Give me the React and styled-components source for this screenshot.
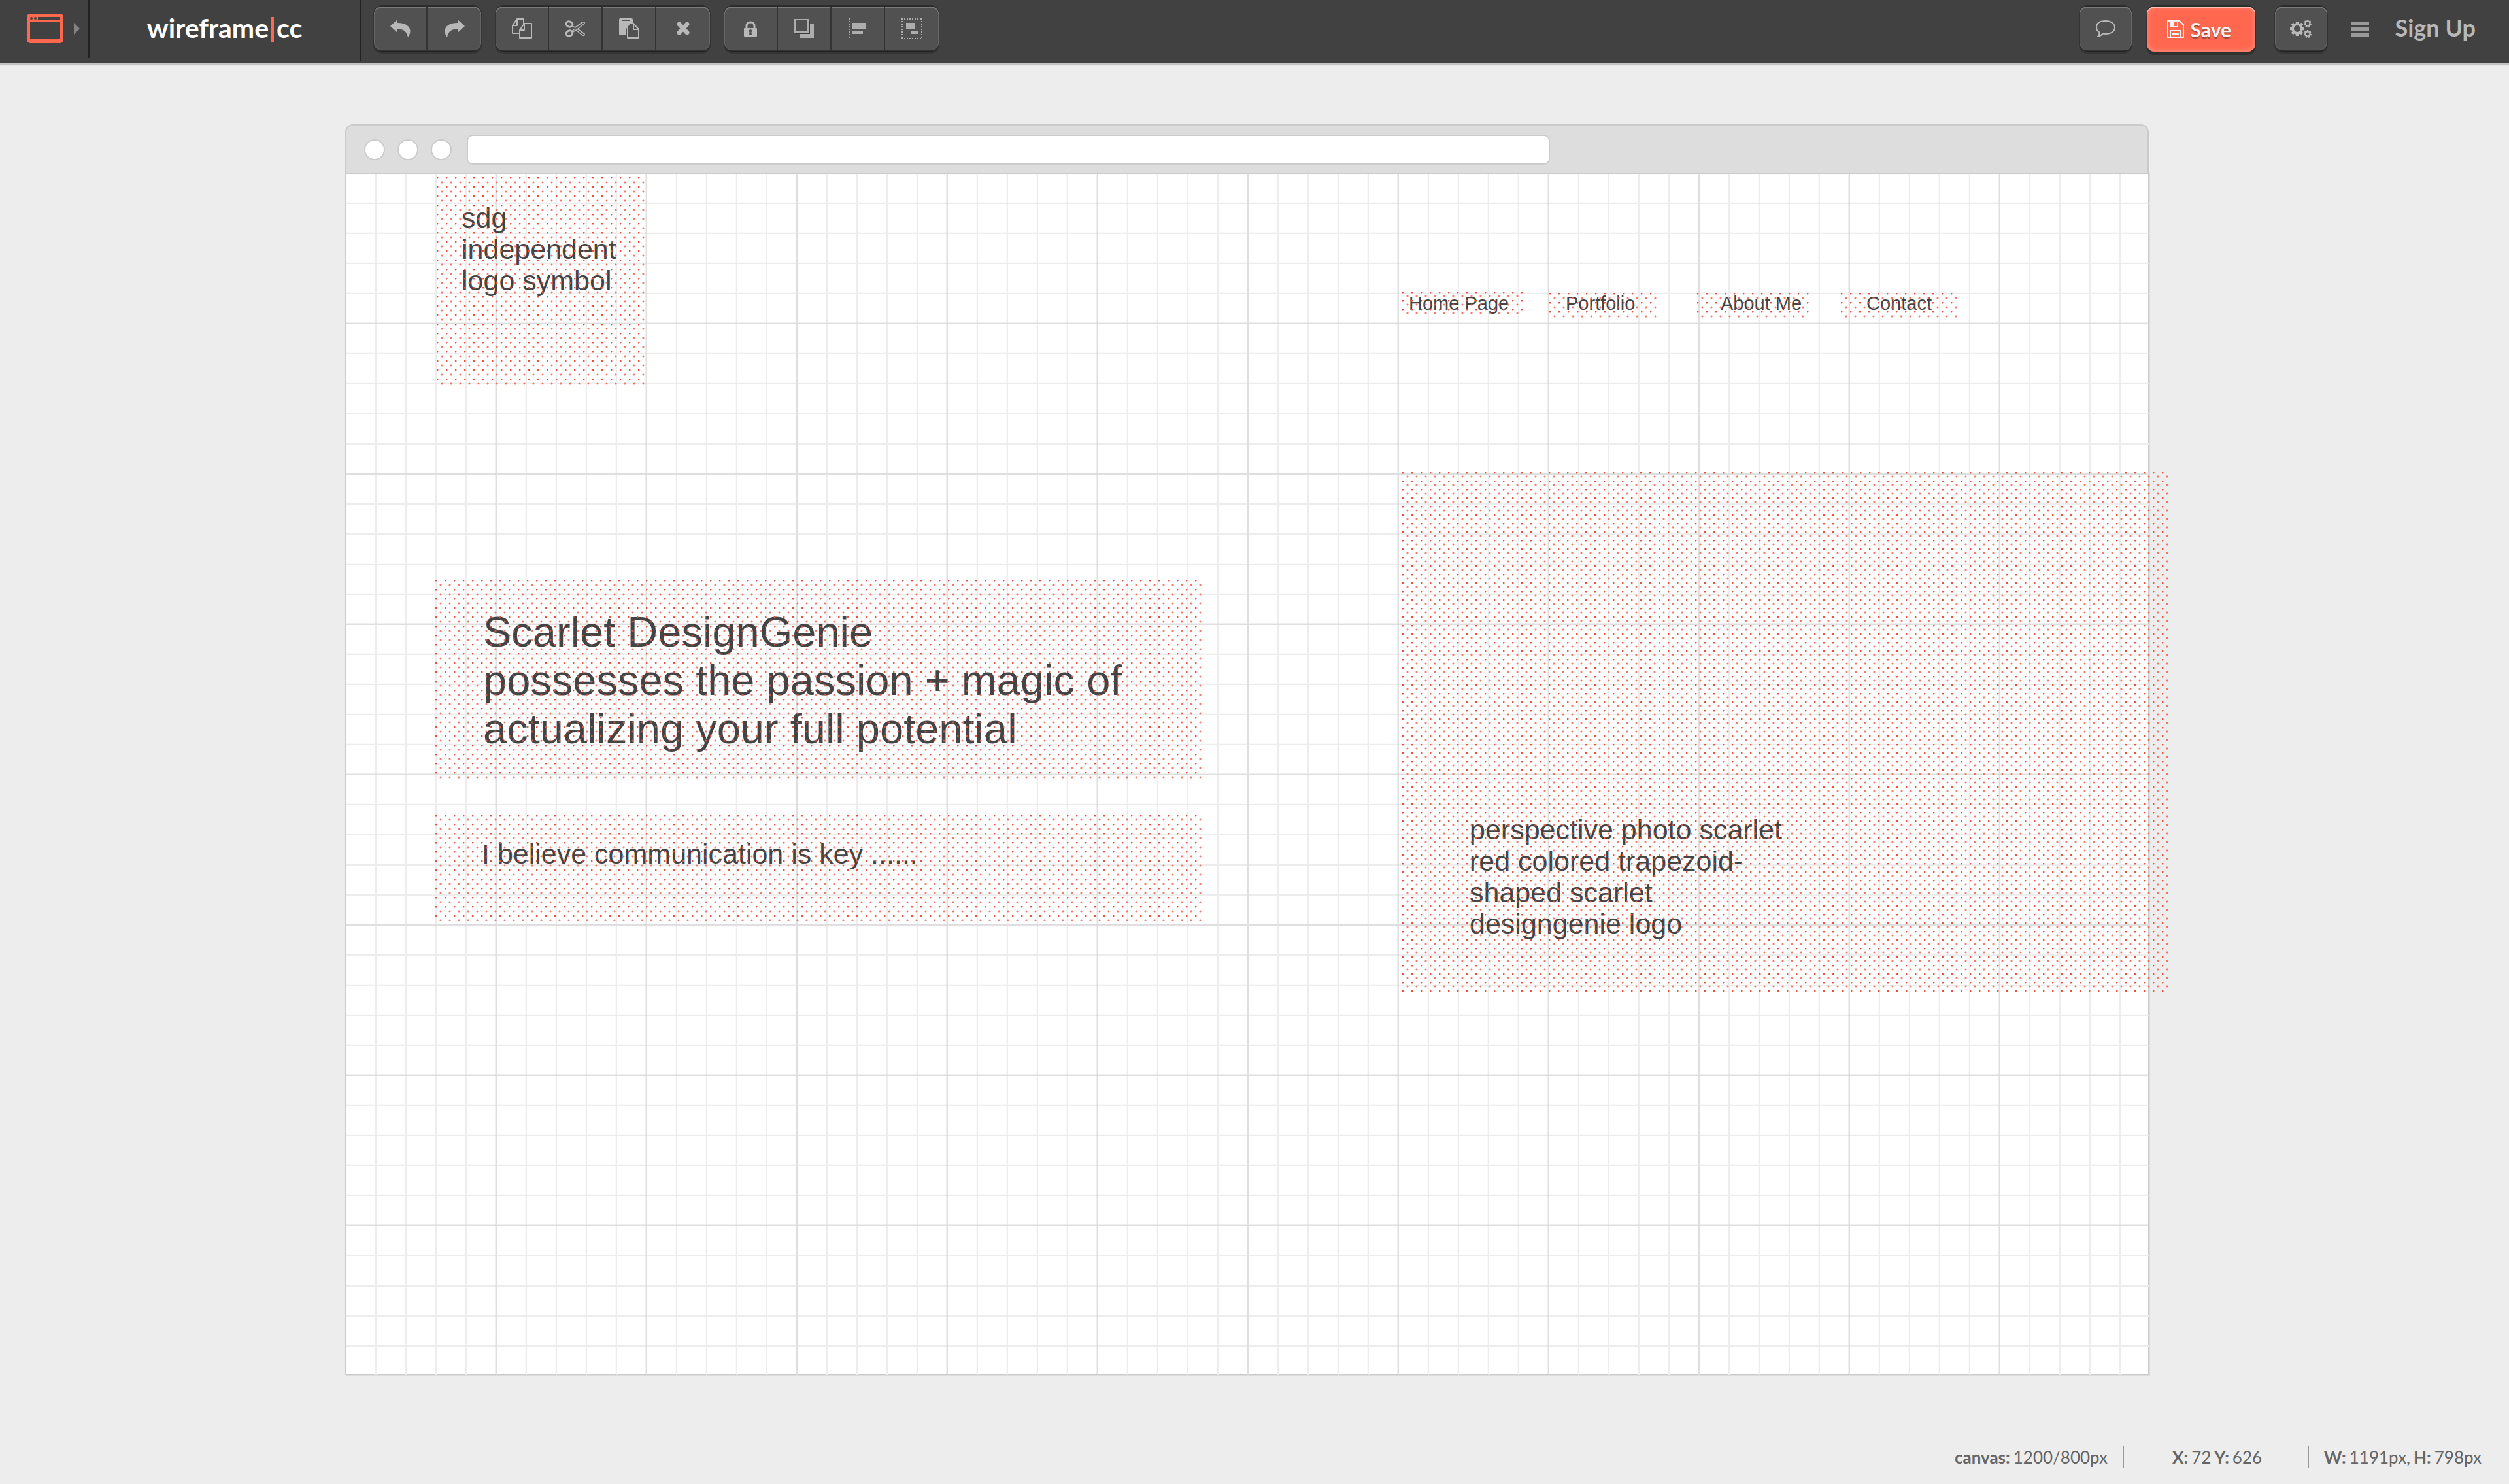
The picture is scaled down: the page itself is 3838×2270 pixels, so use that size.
import React from "react";
import styled, { createGlobalStyle, css } from "styled-components";

const ACCENT = "#ff674f";
const ICON = "#b8b8b8";
const UI_FONT = 'Lato, "Open Sans", sans-serif';
const SKETCH_FONT = '"Liberation Sans", Arial, sans-serif';

const GlobalStyle = createGlobalStyle`
  *, *::before, *::after { box-sizing: border-box; }
  body {
    margin: 0;
    background: #ededed;
    color: #666;
    font-family: ${UI_FONT};
  }
  button, input { font: inherit; color: inherit; border: 0; margin: 0; padding: 0; }
  p, h1 { margin: 0; font-weight: 400; }
  svg { display: block; flex: none; }
`;

const Page = styled.div`
  display: flex;
  flex-direction: column;
  min-height: 100vh;
  overflow: hidden;
`;

/* ---------- top bar ---------- */

const Header = styled.header`
  display: flex;
  align-items: flex-start;
  height: 96px;
  background: #414141;
  box-shadow: 0 3px 0 #c3c3c3, 0 4px 0 #d4d4d4, 0 5px 0 #e4e4e4;
`;

const StencilButton = styled.button`
  display: flex;
  align-items: center;
  gap: 16px;
  width: 137px;
  height: 89px;
  padding: 0 0 2px 41px;
  background: none;
  border-right: 2px solid #222;
`;

const Brand = styled.a`
  display: flex;
  align-items: center;
  justify-content: center;
  width: 415px;
  height: 94px;
  padding-bottom: 9px;
  border-right: 2px solid #222;
  color: #fff;
  font-size: 41px;
  font-weight: 700;
  line-height: 48px;
  text-decoration: none;
`;

const BrandBar = styled.span`
  width: 4px;
  height: 38px;
  margin: 5px 4px 0;
  background: ${ACCENT};
`;

const Tools = styled.div`
  display: flex;
  gap: 22px;
  padding: 10px 0 0 20px;
`;

const raised = css`
  border-radius: 12px;
  background: #515151;
  box-shadow:
    inset 0 2px 0 #7a7a7a,
    inset 1px 0 0 #666,
    inset -1px 0 0 #666,
    0 -2px 0 #2c2c2c,
    0 0 0 1px #333,
    0 2px 0 #222,
    0 4px 0 1px #353535;
`;

const ToolGroup = styled.div`
  ${raised}
  display: flex;
`;

const ToolButton = styled.button`
  display: flex;
  align-items: center;
  justify-content: center;
  width: 82px;
  height: 67px;
  background: none;
  color: ${ICON};

  &:not(:last-child) { border-right: 2px solid #333; }
`;

const Actions = styled.div`
  display: flex;
  align-items: flex-start;
  margin-left: auto;
  padding: 10px 51px 0 0;
`;

const RoundButton = styled.button`
  ${raised}
  display: flex;
  align-items: center;
  justify-content: center;
  width: 80px;
  height: 67px;
  color: ${ICON};
`;

const SaveButton = styled.button`
  display: flex;
  align-items: center;
  gap: 10px;
  width: 166px;
  height: 69px;
  margin: 0 30px 0 23px;
  padding-left: 31px;
  border-radius: 12px;
  background: ${ACCENT};
  box-shadow:
    inset 0 2px 0 #ffc0b5,
    inset 0 0 8px #ff9c8c,
    0 -2px 0 #2c2c2c,
    0 4px 0 1px #303030;
  color: #f3f3f3;
  font-size: 30px;
  font-weight: 700;
  line-height: 36px;
  text-shadow: 0 2px 1px #a04538;
`;

const MenuButton = styled.button`
  display: flex;
  align-items: center;
  height: 67px;
  margin: 0 40px 0 37px;
  padding-top: 2px;
  background: none;
  color: #999;
`;

const SignUp = styled.a`
  display: flex;
  align-items: center;
  height: 67px;
  padding-bottom: 4px;
  color: ${ICON};
  font-size: 36px;
  font-weight: 700;
  line-height: 44px;
  text-decoration: none;
`;

/* ---------- browser frame and canvas ---------- */

const Stage = styled.main`
  padding: 94px 550px 0 528px;
`;

const Chrome = styled.div`
  display: flex;
  align-items: center;
  height: 74px;
  margin-right: 1px;
  padding: 2px 0 0 27px;
  border: 2px solid #cbcbcb;
  border-bottom: 0;
  border-radius: 12px 12px 0 0;
  background: #ddd;
`;

const Dot = styled.span`
  width: 32px;
  height: 32px;
  margin-right: 19px;
  border: 2px solid #cbcbcb;
  border-radius: 50%;
  background: #fff;
`;

const Address = styled.input`
  width: calc(60% + 20px);
  height: 46px;
  margin-left: 4px;
  padding: 0 16px;
  border: 2px solid #cbcbcb;
  border-radius: 9px;
  background: #fff;
  font-size: 26px;
  outline: 0;
`;

const gridLine = (dir, color, edge, step) =>
  `repeating-linear-gradient(${dir}, transparent 0 ${step - 3}px, ${edge} ${step - 3}px ${step - 2}px, ${color} ${step - 2}px ${step}px)`;

const Canvas = styled.section`
  position: relative;
  height: 1840px;
  border-top: 2px solid #cbcbcb;
  background-color: #fff;
  background-image:
    linear-gradient(#cbcbcb, #cbcbcb),
    ${gridLine("to right", "#dfdfdf", "rgba(0, 0, 0, 0.04)", 230)},
    ${gridLine("to bottom", "#dfdfdf", "rgba(0, 0, 0, 0.04)", 230)},
    ${gridLine("to right", "#ededed", "rgba(0, 0, 0, 0.02)", 46)},
    ${gridLine("to bottom", "#ededed", "rgba(0, 0, 0, 0.02)", 46)},
    linear-gradient(#cbcbcb, #cbcbcb),
    linear-gradient(#cbcbcb, #cbcbcb);
  background-size: 2px 100%, auto, auto, auto, auto, 2px 100%, 100% 2px;
  background-position: 0 0, 2px 0, 0 0, 2px 0, 0 0, 100% 0, 0 100%;
  background-repeat: no-repeat;
  box-shadow: 1px 1px 0 #dcdcdc;
`;

const Item = styled.div`
  position: absolute;
  left: ${p => p.$x}px;
  top: ${p => p.$y}px;
  width: ${p => p.$w}px;
  height: ${p => p.$h}px;
  padding: ${p => p.$pad};

  &::after {
    content: "";
    position: absolute;
    inset: 0;
    pointer-events: none;
    background-image:
      radial-gradient(circle at 1px 1px, #ee4f3b 1px, transparent 2px),
      radial-gradient(circle at 8px ${p => p.$row - 6}px, rgba(244, 86, 66, 0.8) 1px, transparent 2px);
    background-size: 14px ${p => p.$row}px;
  }
`;

const Note = styled.p`
  max-width: 500px;
  color: #444;
  font-family: ${SKETCH_FONT};
  font-size: 43px;
  line-height: 48px;
  ${p => p.$wide && "max-width: none;"}
`;

const Headline = styled.h1`
  color: #444;
  font-family: ${SKETCH_FONT};
  font-size: 65px;
  line-height: 74px;
`;

const NavLabel = styled.p`
  color: #444;
  font-family: ${SKETCH_FONT};
  font-size: 29px;
  line-height: 33px;
  white-space: nowrap;
`;

/* ---------- status bar ---------- */

const Status = styled.footer`
  display: flex;
  justify-content: flex-end;
  align-items: center;
  height: 33px;
  margin: auto 42px 25px 0;
  font-size: 26px;
  line-height: 30px;
`;

const Readout = styled.span`
  display: flex;
  gap: 5px;
`;

const Rule = styled.span`
  width: 2px;
  height: 33px;
  background: #999;
  margin: ${p => (p.$end ? "0 23px 0 70px" : "0 74px 0 23px")};
`;

/* ---------- icons ---------- */

const Svg = ({ w, h, children, ...rest }) => (
  <svg width={w} height={h} viewBox={`0 0 ${w} ${h}`} fill="currentColor" aria-hidden="true" {...rest}>
    {children}
  </svg>
);

const outline = { fill: "none", stroke: "currentColor", strokeWidth: 2, strokeLinejoin: "round" };

const WindowIcon = () => (
  <Svg w={56} h={45} color={ACCENT}>
    <path
      fillRule="evenodd"
      d="M5 0h46a5 5 0 0 1 5 5v35a5 5 0 0 1-5 5H5a5 5 0 0 1-5-5V5a5 5 0 0 1 5-5zM5 13v26h46V13zM17 5v4h34V5z"
    />
    <circle cx="7" cy="7" r="2" fill="#414141" />
    <circle cx="13" cy="7" r="2" fill="#414141" />
  </Svg>
);
const Caret = () => (
  <Svg w={9} h={18} color="#848484"><path d="M0 0l9 9-9 9z" /></Svg>
);
const bend = "M11 0 0 10l11 10v-5c9-1 14 3 16 12 8-11 2-22-16-22z";
const UndoIcon = () => <Svg w={31} h={28}><path d={bend} /></Svg>;
const RedoIcon = () => <Svg w={31} h={28}><path d={bend} transform="matrix(-1 0 0 1 31 0)" /></Svg>;
const CopyIcon = () => (
  <Svg w={31} h={32}>
    <path {...outline} d="M11 23H1V11L8 1h10v7M8 1v10H1M12 18l7-10h11v22H12zM19 8v10h-7" />
  </Svg>
);
const CutIcon = () => (
  <Svg w={32} h={26}>
    <ellipse cx="7" cy="6" rx="5" ry="4" {...outline} strokeWidth="3" transform="rotate(25 7 6)" />
    <ellipse cx="7" cy="20" rx="5" ry="4" {...outline} strokeWidth="3" transform="rotate(-25 7 20)" />
    <path {...outline} strokeWidth="1.6" d="M11 9l5 2L27 3q4-1 3 2L19 14l-7 4M11 17l4-4M19 13l11 8q1 3-3 2l-10-8" />
  </Svg>
);
const PasteIcon = () => (
  <Svg w={31} h={32}>
    <path d="M2 0h17q2 0 2 2v5h-3l-7 9v10H2q-2 0-2-2V2q0-2 2-2z" />
    <path d="M4 3h13" stroke="#515151" strokeWidth="2" />
    <path d="M13 18l6-10h4l7 9v13H13z" fill="#515151" />
    <path {...outline} d="M13 8h9l8 9v13H13zM22 8v9h8" />
  </Svg>
);
const DeleteIcon = () => (
  <Svg w={20} h={21}>
    <path d="M4 4l12 13M16 4L4 17" stroke="currentColor" strokeWidth="7" strokeLinecap="round" />
  </Svg>
);
const LockIcon = () => (
  <Svg w={20} h={24}>
    <path {...outline} strokeWidth="3" d="M4 12V8q0-6 6-6t6 6v4" />
    <path fillRule="evenodd" d="M1 11h18q1 0 1 1v11q0 1-1 1H1q-1 0-1-1V12q0-1 1-1zm9 2a2.400 2.400 0 0 0-1.500 4.200L8 21h4l-.5-3.800A2.400 2.400 0 0 0 10 13z" />
  </Svg>
);
const FrontIcon = () => (
  <Svg w={30} h={29} color="#adadad">
    <path d="M24 8h6v21H8v-6h16z" />
    <path d="M22 3h2v20H3v-2h19z" fill="#3a3a3a" />
    <path d="M1 1h20v19H1z" fill="none" stroke="currentColor" strokeWidth="2" />
  </Svg>
);
const AlignIcon = () => (
  <Svg w={26} h={32} color="#adadad">
    <path d="M1 0v32" stroke="currentColor" strokeWidth="2" strokeDasharray="2 2" />
    <path d="M4 7h21v9H4zM4 19h17v5H4z" />
  </Svg>
);
const GroupIcon = () => (
  <Svg w={32} h={32} color="#adadad">
    <path d="M0 1h32M0 31h32M1 0v32M31 0v32" stroke="currentColor" strokeWidth="2" strokeDasharray="2 2" />
    <path d="M7 7h14v9H7zM15 19h10v5H15z" />
  </Svg>
);
const CommentIcon = () => (
  <Svg w={32} h={28}>
    <path {...outline} d="M16 2c8 0 14 4 14 10s-6 10-14 10l-4-.5Q9 25 4 26q3-3 2.500-6.500Q2 17 2 12 2 2 16 2z" />
  </Svg>
);
const DiskIcon = () => (
  <Svg w={26} h={27}>
    <path {...outline} d="M1 1h18l6 6v19H1z" />
    <path fillRule="evenodd" d="M4 1h13v10H4zM11 3v6h4V3z" />
    <path {...outline} d="M5 26V16h16v10M8 21h10" />
  </Svg>
);
const Gear = ({ x, y, r, teeth, hole }) => (
  <g transform={`translate(${x} ${y})`}>
    <circle r={(r + hole) / 2 - r / 10} fill="none" stroke="currentColor" strokeWidth={r - hole - r / 5} />
    {Array.from({ length: teeth }, (_, i) => (
      <rect key={i} x={-r / 5} y={-r} width={r / 2.5} height={r / 3} transform={`rotate(${(i * 360) / teeth})`} />
    ))}
  </g>
);
const GearsIcon = () => (
  <Svg w={34} h={30}>
    <Gear x={11} y={15} r={11} teeth={8} hole={5} />
    <Gear x={27} y={7} r={6} teeth={7} hole={2.4} />
    <Gear x={27} y={23} r={6} teeth={7} hole={2.4} />
  </Svg>
);
const MenuIcon = () => (
  <Svg w={27} h={24}>
    <path d="M0 0h27v5H0zM0 9h27v5H0zM0 18h27v5H0z" />
  </Svg>
);

const TOOL_GROUPS = [
  [["Undo", UndoIcon], ["Redo", RedoIcon]],
  [["Copy", CopyIcon], ["Cut", CutIcon], ["Paste", PasteIcon], ["Delete", DeleteIcon]],
  [["Lock", LockIcon], ["Bring to front", FrontIcon], ["Align", AlignIcon], ["Group", GroupIcon]],
];

const NAV = [
  { label: "Home Page", x: 1617, y: 180, w: 186, h: 35, row: 13, pad: "2px 0 0 10px" },
  { label: "Portfolio", x: 1842, y: 182, w: 164, h: 38, row: 14, pad: "0 0 0 25px" },
  { label: "About Me", x: 2068, y: 182, w: 171, h: 38, row: 14, pad: "0 0 0 36px" },
  { label: "Contact", x: 2288, y: 182, w: 178, h: 38, row: 14, pad: "0 0 0 39px" },
];

export default function App() {
  return (
    <Page>
      <GlobalStyle />
      <Header>
        <StencilButton aria-label="Choose stencil">
          <WindowIcon />
          <Caret />
        </StencilButton>
        <Brand href="#">
          wireframe<BrandBar />cc
        </Brand>
        <Tools>
          {TOOL_GROUPS.map((group, i) => (
            <ToolGroup key={i}>
              {group.map(([label, Icon]) => (
                <ToolButton key={label} aria-label={label}><Icon /></ToolButton>
              ))}
            </ToolGroup>
          ))}
        </Tools>
        <Actions>
          <RoundButton aria-label="Comments"><CommentIcon /></RoundButton>
          <SaveButton><DiskIcon />Save</SaveButton>
          <RoundButton aria-label="Settings"><GearsIcon /></RoundButton>
          <MenuButton aria-label="Menu"><MenuIcon /></MenuButton>
          <SignUp href="#">Sign Up</SignUp>
        </Actions>
      </Header>

      <Stage>
        <Chrome>
          <Dot /><Dot /><Dot />
          <Address aria-label="Address" />
        </Chrome>
        <Canvas>
          <Item $x={140} $y={5} $w={320} $h={318} $row={14} $pad="38px 38px 0">
            <Note>sdg independent logo symbol</Note>
          </Item>
          {NAV.map(n => (
            <Item key={n.label} $x={n.x} $y={n.y} $w={n.w} $h={n.h} $row={n.row} $pad={n.pad}>
              <NavLabel>{n.label}</NavLabel>
            </Item>
          ))}
          <Item $x={138} $y={621} $w={1172} $h={304} $row={14} $pad="43px 73px 0">
            <Headline>
              Scarlet DesignGenie<br />
              possesses the passion + magic of actualizing your full potential
            </Headline>
          </Item>
          <Item $x={138} $y={980} $w={1172} $h={163} $row={14} $pad="36px 71px 0">
            <Note $wide>I believe communication is key ......</Note>
          </Item>
          <Item $x={1617} $y={456} $w={1172} $h={796} $row={13} $pad="523px 103px 0">
            <Note>perspective photo scarlet red colored trapezoid-shaped scarlet designgenie logo</Note>
          </Item>
        </Canvas>
      </Stage>

      <Status>
        <Readout><b>canvas:</b><span>1200/800px</span></Readout>
        <Rule />
        <Readout><b>X:</b><span>72</span><b>Y:</b><span>626</span></Readout>
        <Rule $end />
        <Readout><b>W:</b><span>1191px,</span><b>H:</b><span>798px</span></Readout>
      </Status>
    </Page>
  );
}
